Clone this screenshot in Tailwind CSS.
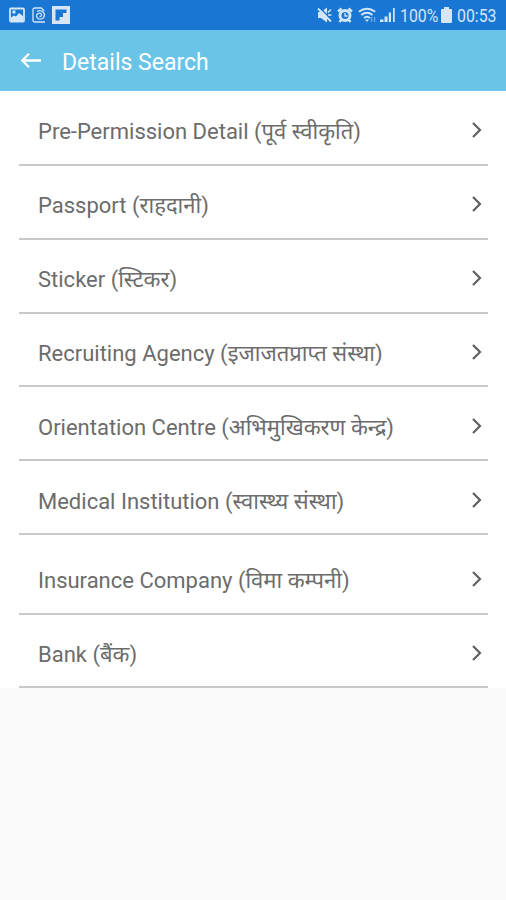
<!DOCTYPE html>
<html lang="ne">
<head>
<meta charset="utf-8">
<title>Details Search</title>
<script src="https://cdn.jsdelivr.net/npm/@tailwindcss/browser@4"></script>
</head>
<body class="bg-[#fafafa] w-[506px] h-[900px] overflow-hidden font-[Roboto,'Noto_Sans',sans-serif]">
<div class="h-[30px] bg-[#1976d2] flex items-center text-[#d3e6fa]">
  <svg class="ml-[9px] w-4 h-4" viewBox="0 0 16 16"><rect x="1" y="1.500" width="14" height="13" rx="1" fill="none" stroke="currentColor" stroke-width="1.800"/><path d="M2 14V10.500l3-2 2 1 3-3.500 4 3v5z" fill="currentColor"/><path d="M3.500 3.500h3v3h-3z" fill="currentColor"/></svg>
  <svg class="ml-[7px] w-[15px] h-4" viewBox="0 0 15 16" fill="none" stroke="currentColor" stroke-width="1.300"><path d="M12 4 9.500 1H3Q1 1 1 3v10q0 2 2 2h10"/><path d="M5 4.500Q8 2.500 11 5q3 3 0 6.200-3 2-5.500 0-2-3 .5-4.700 2.500-1 3.500 1 .3 2.300-2 2"/></svg>
  <svg class="ml-[5px] w-[18px] h-[18px]" viewBox="0 0 18 18"><path fill="currentColor" fill-rule="evenodd" d="M0 0h18v18H0zM3.500 3.500v11h4v-3.500h3.500V7h3.500V3.500z"/></svg>
  <svg class="ml-auto w-4 h-4" viewBox="0 0 16 16"><path fill="currentColor" d="M1 5h3l6-4.500v15L4 11H1z"/><path d="M2.500 .5l13 13" stroke="#1976d2" stroke-width="1.500"/><path d="M1 1.500 14 14.500" stroke="currentColor" stroke-width="1.800"/><path d="M11 8h3.500M11 5.500l3-3" stroke="currentColor" stroke-width="1.500"/></svg>
  <svg class="ml-[4px] w-4 h-4" viewBox="0 0 16 16"><path d="M1 4.500 4.500 1.500M15 4.500l-3.500-3M2.500 15l2.500-3M13.500 15 11 12" stroke="currentColor" stroke-width="2.400"/><circle cx="8" cy="8.500" r="6.500" fill="currentColor"/><circle cx="8" cy="8.500" r="3.500" fill="#1976d2"/><path d="M8 6v3h2.500" fill="none" stroke="currentColor" stroke-width="1.300"/></svg>
  <svg class="ml-[5px] w-[19px] h-4" viewBox="0 0 19 16" fill="none" stroke="currentColor" stroke-width="1.900"><path d="M.8 4.800Q9 -1.500 17.200 4.800M3.300 8Q9 3.500 14.500 8M6 11q3-2.500 6 0"/><path d="M7 12.500h4L9 15z" fill="currentColor" stroke="none"/><path d="M13.500 10v5M16.500 10v5" stroke-width="1.500" opacity=".45"/></svg>
  <svg class="ml-[3px] w-[16px] h-4" viewBox="0 0 16 16" fill="currentColor"><path d="M0 12.500h3.500V15H0zM4.500 9.500h3V15h-3zM8.800 5.500h2.200V15H8.800zM13 1h1.700v14H13z"/></svg>
  <span class="ml-[4px] w-[38px] whitespace-nowrap text-[18px] leading-[30px] pt-[2px] inline-block origin-left scale-x-[.88]">100%</span>
  <svg class="ml-[3px] w-[11px] h-4" viewBox="0 0 11 16"><path fill="currentColor" d="M3 0h5v2h2q1 0 1 1v12q0 1-1 1H1q-1 0-1-1V3q0-1 1-1h2z"/></svg>
  <span class="ml-[5px] mr-[9px] w-[40px] whitespace-nowrap text-[18px] leading-[30px] pt-[2px] inline-block origin-left scale-x-[.88]">00:53</span>
</div>
<div class="h-[61px] bg-[#69c4e8] flex items-center text-white">
  <svg class="ml-[20px] w-[22px] h-[18px]" viewBox="0 0 22 18" fill="none" stroke="currentColor" stroke-width="2.300"><path d="M21 8.500H3M9 1.800 2.300 8.500 9 15.200"/></svg>
  <h1 class="ml-[20px] text-[23px] leading-[30px] pt-[4px] whitespace-nowrap">Details Search</h1>
</div>
<ul id="list" class="bg-white pl-[19px] pr-[18px] pt-px h-[597px] text-[#6c6c6c] text-[22px]"></ul>
<script>
const rows = [
  ["Pre-Permission Detail", "पूर्व स्वीकृति", 74, 17],
  ["Passport", "राहदानी", 74, 17],
  ["Sticker", "स्टिकर", 74, 17],
  ["Recruiting Agency", "इजाजतप्राप्त संस्था", 73, 16],
  ["Orientation Centre", "अभिमुखिकरण केन्द्र", 74, 16],
  ["Medical Institution", "स्वास्थ्य संस्था", 74, 16],
  ["Insurance Company", "विमा कम्पनी", 80, 17],
  ["Bank", "बैंक", 73, 16]
];
document.getElementById("list").innerHTML = rows.map(([en, ne, h, pb]) =>
  `<li class="flex items-end border-b-2 border-[#c9c9c9] pl-[19px] pr-[4px]" style="height:${h}px;padding-bottom:${pb}px">
    <span class="h-[30px] leading-[30px] whitespace-nowrap">${en} (<span>${ne}</span>)</span>
    <svg class="ml-auto mb-[8px] w-[14px] h-[18px]" viewBox="0 0 14 18" fill="none" stroke="#606060" stroke-width="2.200"><path d="M3 2l7 7-7 7"/></svg>
  </li>`).join("");
</script>
</body>
</html>
